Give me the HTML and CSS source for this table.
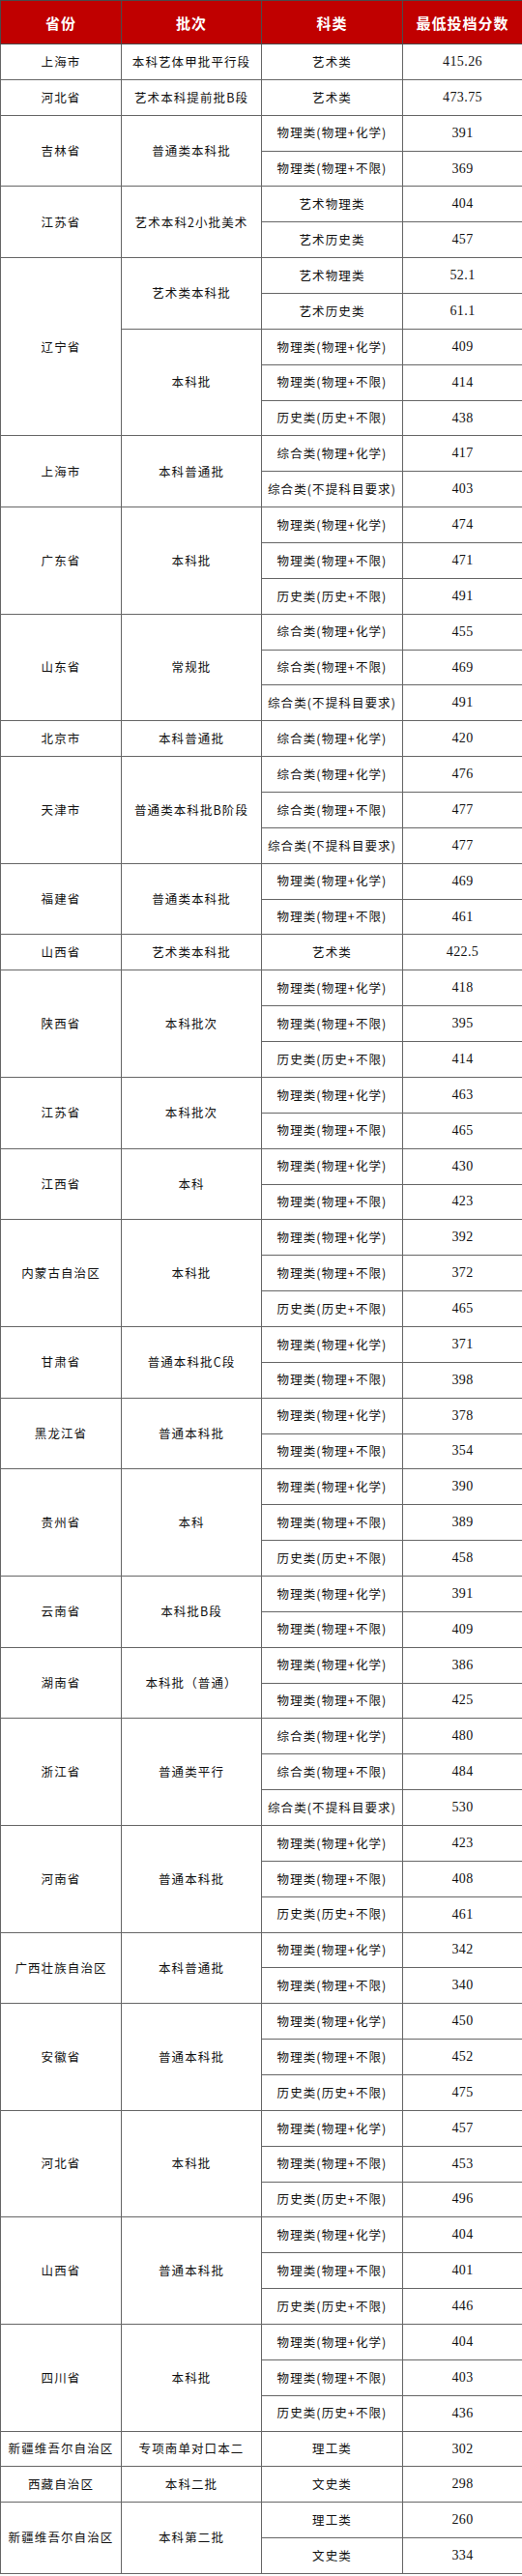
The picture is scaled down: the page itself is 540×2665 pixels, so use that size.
FILE: index.html
```html
<!DOCTYPE html>
<html lang="zh-CN">
<head>
<meta charset="utf-8">
<title>最低投档分数</title>
<link rel="stylesheet" href="styles.css">
</head>
<body>
<table class="scores">
<colgroup><col class="c1"><col class="c2"><col class="c3"><col class="c4"></colgroup>
<thead>
<tr class="head"><th>省份</th><th>批次</th><th>科类</th><th>最低投档分数</th></tr>
</thead>
<tbody>
<tr class="r"><td>上海市</td><td>本科艺体甲批平行段</td><td>艺术类</td><td class="n">415.26</td></tr>
<tr class="r"><td>河北省</td><td>艺术本科提前批B段</td><td>艺术类</td><td class="n">473.75</td></tr>
<tr class="r"><td rowspan="2">吉林省</td><td rowspan="2">普通类本科批</td><td>物理类(物理+化学)</td><td class="n">391</td></tr>
<tr class="r"><td>物理类(物理+不限)</td><td class="n">369</td></tr>
<tr class="r"><td rowspan="2">江苏省</td><td rowspan="2">艺术本科2小批美术</td><td>艺术物理类</td><td class="n">404</td></tr>
<tr class="r"><td>艺术历史类</td><td class="n">457</td></tr>
<tr class="r"><td rowspan="5">辽宁省</td><td rowspan="2">艺术类本科批</td><td>艺术物理类</td><td class="n">52.1</td></tr>
<tr class="r"><td>艺术历史类</td><td class="n">61.1</td></tr>
<tr class="r"><td rowspan="3">本科批</td><td>物理类(物理+化学)</td><td class="n">409</td></tr>
<tr class="r"><td>物理类(物理+不限)</td><td class="n">414</td></tr>
<tr class="r"><td>历史类(历史+不限)</td><td class="n">438</td></tr>
<tr class="r"><td rowspan="2">上海市</td><td rowspan="2">本科普通批</td><td>综合类(物理+化学)</td><td class="n">417</td></tr>
<tr class="r"><td>综合类(不提科目要求)</td><td class="n">403</td></tr>
<tr class="r"><td rowspan="3">广东省</td><td rowspan="3">本科批</td><td>物理类(物理+化学)</td><td class="n">474</td></tr>
<tr class="r"><td>物理类(物理+不限)</td><td class="n">471</td></tr>
<tr class="r"><td>历史类(历史+不限)</td><td class="n">491</td></tr>
<tr class="r"><td rowspan="3">山东省</td><td rowspan="3">常规批</td><td>综合类(物理+化学)</td><td class="n">455</td></tr>
<tr class="r"><td>综合类(物理+不限)</td><td class="n">469</td></tr>
<tr class="r"><td>综合类(不提科目要求)</td><td class="n">491</td></tr>
<tr class="r"><td>北京市</td><td>本科普通批</td><td>综合类(物理+化学)</td><td class="n">420</td></tr>
<tr class="r"><td rowspan="3">天津市</td><td rowspan="3">普通类本科批B阶段</td><td>综合类(物理+化学)</td><td class="n">476</td></tr>
<tr class="r"><td>综合类(物理+不限)</td><td class="n">477</td></tr>
<tr class="r"><td>综合类(不提科目要求)</td><td class="n">477</td></tr>
<tr class="r"><td rowspan="2">福建省</td><td rowspan="2">普通类本科批</td><td>物理类(物理+化学)</td><td class="n">469</td></tr>
<tr class="r"><td>物理类(物理+不限)</td><td class="n">461</td></tr>
<tr class="r"><td>山西省</td><td>艺术类本科批</td><td>艺术类</td><td class="n">422.5</td></tr>
<tr class="r"><td rowspan="3">陕西省</td><td rowspan="3">本科批次</td><td>物理类(物理+化学)</td><td class="n">418</td></tr>
<tr class="r"><td>物理类(物理+不限)</td><td class="n">395</td></tr>
<tr class="r"><td>历史类(历史+不限)</td><td class="n">414</td></tr>
<tr class="r"><td rowspan="2">江苏省</td><td rowspan="2">本科批次</td><td>物理类(物理+化学)</td><td class="n">463</td></tr>
<tr class="r"><td>物理类(物理+不限)</td><td class="n">465</td></tr>
<tr class="r"><td rowspan="2">江西省</td><td rowspan="2">本科</td><td>物理类(物理+化学)</td><td class="n">430</td></tr>
<tr class="r"><td>物理类(物理+不限)</td><td class="n">423</td></tr>
<tr class="r"><td rowspan="3">内蒙古自治区</td><td rowspan="3">本科批</td><td>物理类(物理+化学)</td><td class="n">392</td></tr>
<tr class="r"><td>物理类(物理+不限)</td><td class="n">372</td></tr>
<tr class="r"><td>历史类(历史+不限)</td><td class="n">465</td></tr>
<tr class="r"><td rowspan="2">甘肃省</td><td rowspan="2">普通本科批C段</td><td>物理类(物理+化学)</td><td class="n">371</td></tr>
<tr class="r"><td>物理类(物理+不限)</td><td class="n">398</td></tr>
<tr class="r"><td rowspan="2">黑龙江省</td><td rowspan="2">普通本科批</td><td>物理类(物理+化学)</td><td class="n">378</td></tr>
<tr class="r"><td>物理类(物理+不限)</td><td class="n">354</td></tr>
<tr class="r"><td rowspan="3">贵州省</td><td rowspan="3">本科</td><td>物理类(物理+化学)</td><td class="n">390</td></tr>
<tr class="r"><td>物理类(物理+不限)</td><td class="n">389</td></tr>
<tr class="r"><td>历史类(历史+不限)</td><td class="n">458</td></tr>
<tr class="r"><td rowspan="2">云南省</td><td rowspan="2">本科批B段</td><td>物理类(物理+化学)</td><td class="n">391</td></tr>
<tr class="r"><td>物理类(物理+不限)</td><td class="n">409</td></tr>
<tr class="r"><td rowspan="2">湖南省</td><td rowspan="2">本科批（普通）</td><td>物理类(物理+化学)</td><td class="n">386</td></tr>
<tr class="r"><td>物理类(物理+不限)</td><td class="n">425</td></tr>
<tr class="r"><td rowspan="3">浙江省</td><td rowspan="3">普通类平行</td><td>综合类(物理+化学)</td><td class="n">480</td></tr>
<tr class="r"><td>综合类(物理+不限)</td><td class="n">484</td></tr>
<tr class="r"><td>综合类(不提科目要求)</td><td class="n">530</td></tr>
<tr class="r"><td rowspan="3">河南省</td><td rowspan="3">普通本科批</td><td>物理类(物理+化学)</td><td class="n">423</td></tr>
<tr class="r"><td>物理类(物理+不限)</td><td class="n">408</td></tr>
<tr class="r"><td>历史类(历史+不限)</td><td class="n">461</td></tr>
<tr class="r"><td rowspan="2">广西壮族自治区</td><td rowspan="2">本科普通批</td><td>物理类(物理+化学)</td><td class="n">342</td></tr>
<tr class="r"><td>物理类(物理+不限)</td><td class="n">340</td></tr>
<tr class="r"><td rowspan="3">安徽省</td><td rowspan="3">普通本科批</td><td>物理类(物理+化学)</td><td class="n">450</td></tr>
<tr class="r"><td>物理类(物理+不限)</td><td class="n">452</td></tr>
<tr class="r"><td>历史类(历史+不限)</td><td class="n">475</td></tr>
<tr class="r"><td rowspan="3">河北省</td><td rowspan="3">本科批</td><td>物理类(物理+化学)</td><td class="n">457</td></tr>
<tr class="r"><td>物理类(物理+不限)</td><td class="n">453</td></tr>
<tr class="r"><td>历史类(历史+不限)</td><td class="n">496</td></tr>
<tr class="r"><td rowspan="3">山西省</td><td rowspan="3">普通本科批</td><td>物理类(物理+化学)</td><td class="n">404</td></tr>
<tr class="r"><td>物理类(物理+不限)</td><td class="n">401</td></tr>
<tr class="r"><td>历史类(历史+不限)</td><td class="n">446</td></tr>
<tr class="r"><td rowspan="3">四川省</td><td rowspan="3">本科批</td><td>物理类(物理+化学)</td><td class="n">404</td></tr>
<tr class="r"><td>物理类(物理+不限)</td><td class="n">403</td></tr>
<tr class="r"><td>历史类(历史+不限)</td><td class="n">436</td></tr>
<tr class="r"><td>新疆维吾尔自治区</td><td>专项南单对口本二</td><td>理工类</td><td class="n">302</td></tr>
<tr class="r"><td>西藏自治区</td><td>本科二批</td><td>文史类</td><td class="n">298</td></tr>
<tr class="r"><td rowspan="2">新疆维吾尔自治区</td><td rowspan="2">本科第二批</td><td>理工类</td><td class="n">260</td></tr>
<tr class="r"><td>文史类</td><td class="n">334</td></tr>
</tbody>
</table>
</body>
</html>
```
FILE: styles.css
```css
html, body {
  margin: 0;
  padding: 0;
  background: #ffffff;
}
body {
  font-family: "Noto Sans CJK SC", "Noto Sans", sans-serif;
  color: #111111;
}
.scores {
  border-collapse: collapse;
  table-layout: fixed;
  width: 540px;
  border: 1px solid #333333;
}
.c1 { width: 125px; }
.c2 { width: 145px; }
.c3 { width: 146px; }
.c4 { width: 124px; }
.head {
  height: 45px;
}
.head th {
  background: #c00000;
  color: #ffffff;
  font-size: 15px;
  font-weight: bold;
  letter-spacing: 1px;
  border: 1px solid #4a4a4a;
  padding: 0;
  text-align: center;
  vertical-align: middle;
}
.r {
  height: 36.87px;
}
.r td {
  border: 1px solid #666666;
  padding: 0;
  text-align: center;
  vertical-align: middle;
  font-size: 12.5px;
  letter-spacing: 1.1px;
  line-height: 1;
  white-space: nowrap;
}
.r td.n {
  font-family: "Liberation Serif", "Noto Sans CJK SC", serif;
  font-size: 14px;
  letter-spacing: 0.4px;
  color: #111111;
}
```
